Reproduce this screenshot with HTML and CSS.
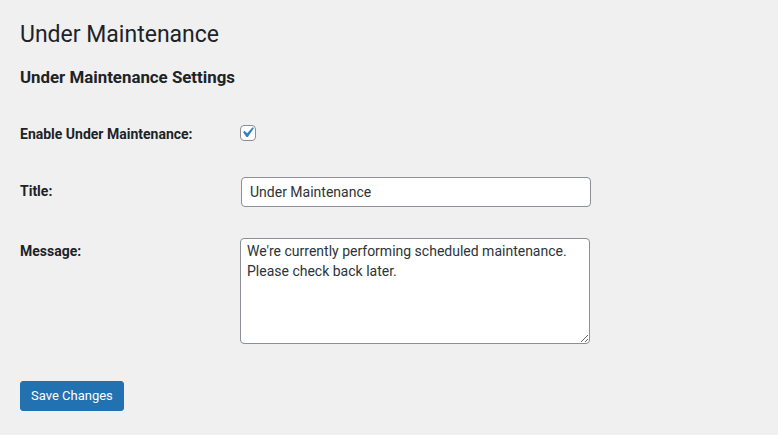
FILE: index.html
```html
<!DOCTYPE html>
<html lang="en">
<head>
<meta charset="utf-8">
<title>Under Maintenance</title>
<link rel="stylesheet" href="styles.css">
</head>
<body>
<div class="wrap">
  <h1 class="page-title">Under Maintenance</h1>
  <h2 class="section-title">Under Maintenance Settings</h2>
  <form class="settings-form">
    <div class="form-grid">
      <div class="row-label">Enable Under Maintenance:</div>
      <div class="row-field row-check">
        <span class="checkbox" role="checkbox" aria-checked="true">
          <svg viewBox="0 0 20 20" width="21" height="21"><path d="M14.83 4.89l1.34.94-5.81 8.38H9.02L5.78 9.67l1.34-1.25 2.57 2.4z" fill="#3582c4"/></svg>
        </span>
      </div>

      <div class="row-label">Title:</div>
      <div class="row-field">
        <input class="text-input" type="text" value="Under Maintenance">
      </div>

      <div class="row-label">Message:</div>
      <div class="row-field">
        <textarea class="text-area" rows="5">We're currently performing scheduled maintenance. Please check back later.</textarea>
      </div>
    </div>
    <div class="submit-row">
      <button type="button" class="button-primary">Save Changes</button>
    </div>
  </form>
</div>
</body>
</html>
```

FILE: styles.css
```css
html, body {
  margin: 0;
  padding: 0;
  background: #f0f0f1;
}
body {
  font-family: Roboto, "Liberation Sans", sans-serif;
  font-size: 13px;
  color: #1d2327;
}
.wrap {
  padding: 0 20px;
}
.page-title {
  margin: 0;
  padding-top: 20px;
  font-size: 23px;
  font-weight: 400;
  line-height: 30px;
  color: #1d2327;
}
.section-title {
  margin: 16px 0 0;
  font-size: 16.85px;
  font-weight: 700;
  line-height: 22px;
  color: #1d2327;
}
.settings-form {
  margin-top: 16px;
}
.form-grid {
  display: grid;
  grid-template-columns: 220px 352px;
}
.row-label {
  padding-top: 20px;
  font-size: 14px;
  font-weight: 700;
  line-height: 18px;
  color: #1d2327;
}
.row-label:first-child {
  padding-top: 21px;
}
.row-field {
  padding: 15px 0;
}
.row-check {
  height: 28px;
}
.checkbox {
  display: block;
  box-sizing: border-box;
  width: 16px;
  height: 16px;
  margin-top: 6px;
  border: 1px solid #8c8f94;
  border-radius: 4px;
  background: #fff;
  position: relative;
}
.checkbox svg {
  position: absolute;
  left: -4px;
  top: -4px;
}
.text-input {
  display: block;
  box-sizing: border-box;
  width: 350px;
  height: 30px;
  margin: 0 0 0 1px;
  padding: 0 8px;
  border: 1px solid #8c8f94;
  border-radius: 4px;
  background: #fff;
  font-family: Roboto, "Liberation Sans", sans-serif;
  font-size: 14px;
  line-height: 2;
  color: #2c3338;
}
.text-area {
  display: block;
  box-sizing: border-box;
  width: 350px;
  height: 106px;
  margin: 1px 0 0;
  padding: 2px 6px;
  border: 1px solid #8c8f94;
  border-radius: 4px;
  background: #fff;
  font-family: Roboto, "Liberation Sans", sans-serif;
  font-size: 14px;
  line-height: 20px;
  color: #2c3338;
}
.submit-row {
  padding-top: 22px;
}
.button-primary {
  display: block;
  box-sizing: border-box;
  height: 30px;
  padding: 0 10px;
  border: 1px solid #2271b1;
  border-radius: 3px;
  background: #2271b1;
  color: #fff;
  font-family: Roboto, "Liberation Sans", sans-serif;
  font-size: 13px;
  line-height: 28px;
  cursor: pointer;
}
```
